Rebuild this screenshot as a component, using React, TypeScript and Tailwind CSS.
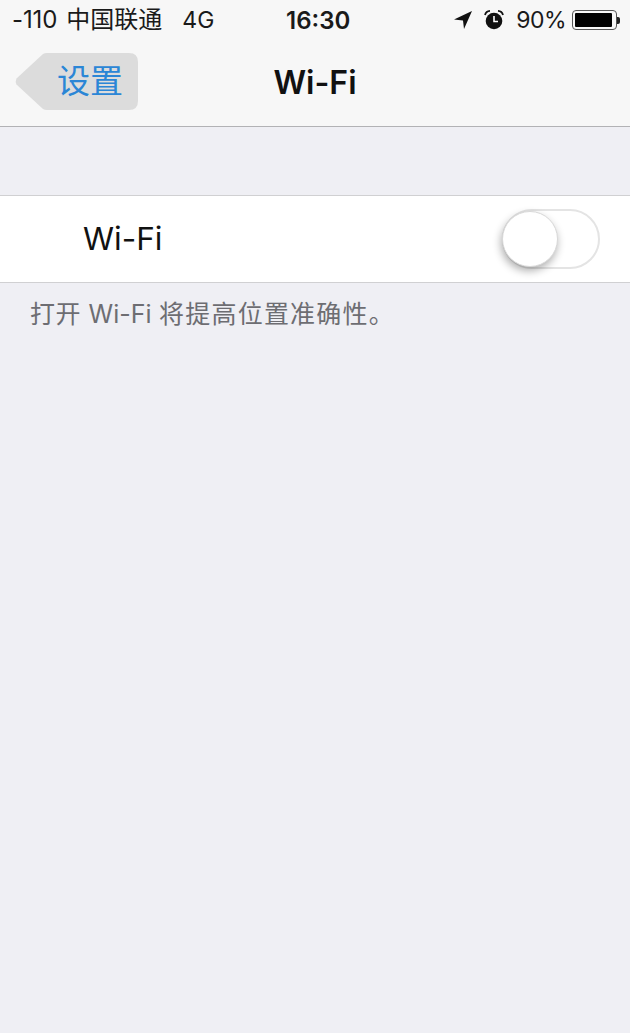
const font = { fontFamily: 'Inter, "Liberation Sans", "Noto Sans CJK SC", sans-serif' };

export default function App() {
  return (
    <div className="w-[630px] h-[1033px] overflow-hidden bg-[#efeff4] flex flex-col" style={font}>
      <div className="h-[127px] bg-[#f7f7f7] border-b border-[#b2b2b5] flex flex-col shrink-0">
        <div className="h-[40px] flex items-center relative text-[22px] text-[#1a1a1a] pl-[12px] pr-[10px] shrink-0">
          <span className="text-[24px] tracking-[-0.1px]">-110</span>
          <span className="ml-[9px] text-[24px]">中国联通</span>
          <span className="ml-[20px] text-[23px]">4G</span>
          <span className="absolute left-[286px] top-[6px] font-semibold text-[24px] leading-[30px]">16:30</span>
          <div className="ml-auto flex items-center">
            <svg width="20" height="20" viewBox="0 0 20 20" className="mr-[10px]">
              <path d="M19 1 L1 9.5 L10 10.5 L11 19 Z" fill="#111" />
            </svg>
            <svg width="22" height="22" viewBox="0 0 22 22" className="mr-[11px]">
              <circle cx="11" cy="12" r="8.3" fill="#111" />
              <path d="M11 7 V12.5 H15" stroke="#fff" strokeWidth="1.6" fill="none" />
              <path d="M2 6 Q3 2 7 1.8 M20 6 Q19 2 15 1.8" stroke="#111" strokeWidth="1.8" fill="none" />
            </svg>
            <span className="text-[23px] tracking-[-0.5px]">90%</span>
            <div className="ml-[6px] w-[45px] h-[20px] border border-[#555] rounded-[4px] p-[2px] flex">
              <div className="w-[37px] h-full bg-black rounded-[1px]" />
            </div>
            <div className="w-[3px] h-[7px] bg-[#222] rounded-r-[2px]" />
          </div>
        </div>
        <div className="relative flex-1 flex items-center justify-center pb-[1px]">
          <div className="absolute left-[15px] top-[13px] w-[123px] h-[57px] flex items-center pl-[42px]">
            <svg className="absolute inset-0" width="123" height="57" viewBox="0 0 123 57">
              <path d="M28 1 Q29.5 0 32 0 H114 Q123 0 123 9 V48 Q123 57 114 57 H32 Q29.5 57 28 56 L1.5 31.5 Q0 28.5 1.5 25.5 Z" fill="#dcdcdc" />
            </svg>
            <span className="relative text-[33px] leading-none text-[#2b86d6]">设置</span>
          </div>
          <span className="font-semibold text-[32px] leading-none text-[#111]">Wi-Fi</span>
        </div>
      </div>

      <div className="mt-[68px] h-[88px] bg-white border-y border-[#d0d0d2] flex items-center justify-between pl-[83px] pr-[30px] shrink-0">
        <span className="text-[31.5px] leading-none text-[#111]">Wi-Fi</span>
        <div className="relative w-[98px] h-[60px] rounded-full border-2 border-[#e4e4e4] bg-white">
          <div className="absolute left-[-2px] top-[0px] w-[56px] h-[56px] rounded-full bg-white border border-[#d8d8d8] shadow-[-1px_4px_9px_rgba(0,0,0,0.32)]" />
        </div>
      </div>

      <div className="pl-[30px] pt-[15px] text-[25px] leading-[32px] tracking-[0.5px] text-[#6d6d72]">
        打开 <span className="tracking-[0px]">Wi-Fi</span> <span className="tracking-[1.2px]">将提高位置准确性。</span>
      </div>
    </div>
  );
}
